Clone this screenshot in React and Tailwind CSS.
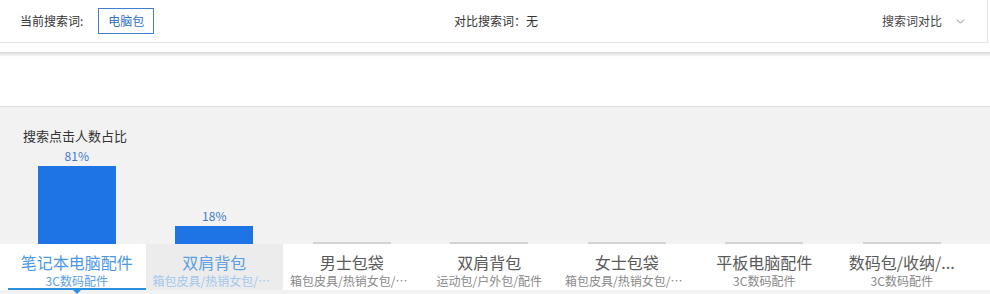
import { ChevronDown } from "lucide-react";

const items = [
	{ title: "笔记本电脑配件", sub: "3C数码配件", pct: "81%", h: 78 },
	{ title: "双肩背包", sub: "箱包皮具/热销女包/男包", pct: "18%", h: 18 },
	{ title: "男士包袋", sub: "箱包皮具/热销女包/男包", h: 0 },
	{ title: "双肩背包", sub: "运动包/户外包/配件", h: 0 },
	{ title: "女士包袋", sub: "箱包皮具/热销女包/男包", h: 0 },
	{ title: "平板电脑配件", sub: "3C数码配件", h: 0 },
	{ title: "数码包/收纳/...", sub: "3C数码配件", h: 0 },
];

export default function App() {
	const active = 0;
	const hover = 1;

	return (
		<div className="w-[990px] h-[294px] overflow-hidden bg-white font-['Noto_Sans_CJK_SC',sans-serif]">
			{/* search bar */}
			<div className="mr-[2px] h-[43px] border-r border-b border-[#e3e3e3] flex items-center pl-[20px] pr-[20px] text-[12px] text-[#333]">
				<div className="flex items-center w-[300px]">
					<span>当前搜索词:</span>
					<span className="ml-[15px] h-[26px] px-[9px] border border-[#3f80d6] text-[#2f6fc4] flex items-center">电脑包</span>
				</div>
				<div className="flex-1 text-center pl-[5px]">对比搜索词：无</div>
				<div className="w-[300px] flex items-center justify-end text-[#444]">
					<span>搜索词对比</span>
					<ChevronDown size={13} strokeWidth={1.5} className="ml-[12px] text-[#666]" />
				</div>
			</div>
			<div className="h-[9px]" />
			<div className="h-[5px] bg-gradient-to-b from-[#d9d9d9] to-white" />
			<div className="h-[50px] border-b border-[#dedede]" />

			{/* chart */}
			<div className="bg-[#f2f2f2] h-[137px] flex flex-col">
				<div className="pl-[23px] pt-[20px] text-[13px] leading-[18px] text-[#333]">搜索点击人数占比</div>
				<div className="flex-1 flex items-end px-[8px]">
					{items.map((it, i) => (
						<div key={i} className="w-[137.5px] shrink-0 flex flex-col items-center justify-end">
							{it.pct && <div className="text-[12px] leading-[14px] mb-[3px] text-[#3f78cc]">{it.pct}</div>}
							{it.h > 0 ? (
								<div className="w-[78px] bg-[#1f74e5]" style={{ height: it.h }} />
							) : (
								<div className="w-[78px] h-[2px] bg-[#d2d2d2]" />
							)}
						</div>
					))}
				</div>
			</div>

			{/* tabs */}
			<div className="bg-white flex pl-[8px] h-[46px]">
				{items.map((it, i) => (
					<div
						key={i}
						className={`relative w-[137.5px] shrink-0 px-[7px] pt-[7px] text-center ${i === hover ? "bg-[#ececec]" : ""}`}
					>
						<div
							className={`text-[16px] leading-[22px] truncate ${i === active ? "text-[#4a97e4]" : i === hover ? "text-[#5d9fe2]" : "text-[#5a5a5a]"}`}
						>
							{it.title}
						</div>
						<div
							className={`text-[12px] leading-[15px] truncate ${i === active ? "text-[#5aa0e6]" : i === hover ? "text-[#a3c7ee]" : "text-[#888]"}`}
						>
							{it.sub}
						</div>
						{i === active && (
							<>
								<div className="absolute left-0 right-0 bottom-0 h-[2px] bg-[#2d8fe0]" />
								<div className="absolute left-1/2 -translate-x-1/2 -bottom-[4px] w-0 h-0 border-l-[4px] border-r-[4px] border-t-[4px] border-l-transparent border-r-transparent border-t-[#2d8fe0]" />
							</>
						)}
					</div>
				))}
			</div>
			<div className="h-[10px] bg-[#f2f2f2]" />
		</div>
	);
}
